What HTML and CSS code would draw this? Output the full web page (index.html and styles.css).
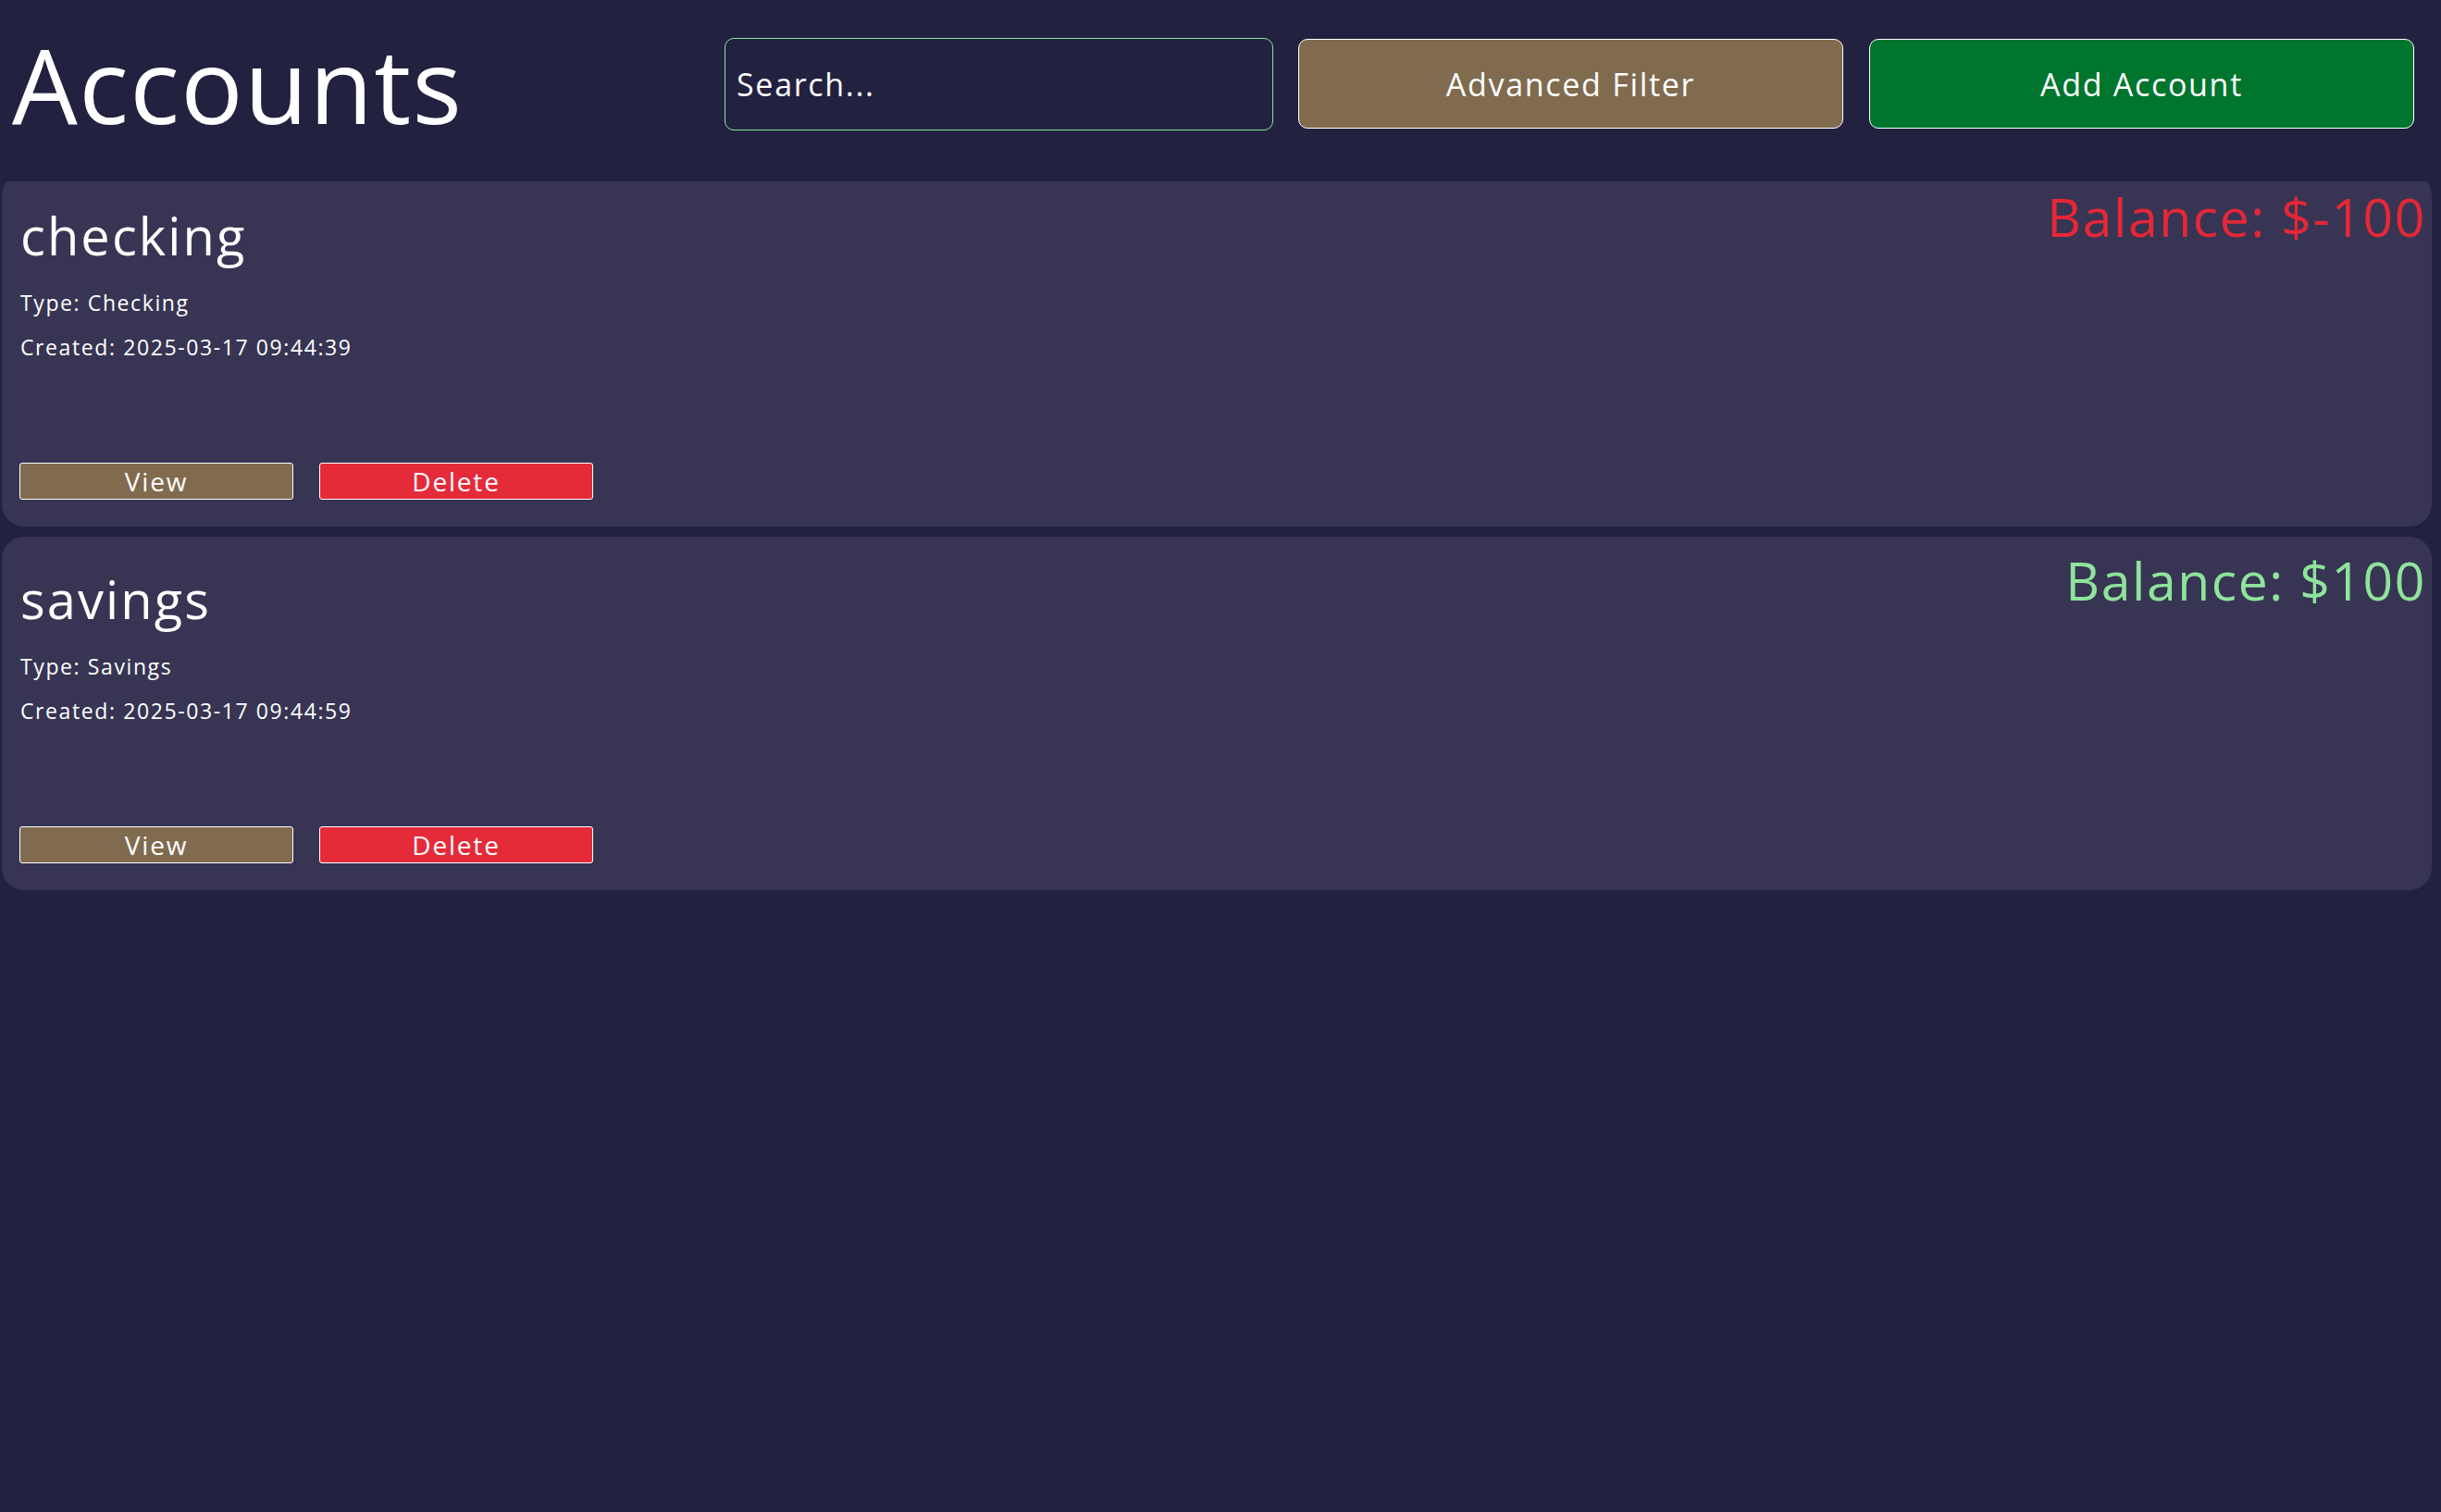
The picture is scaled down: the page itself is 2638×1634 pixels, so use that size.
FILE: index.html
```html
<!DOCTYPE html>
<html lang="en">
<head>
<meta charset="utf-8">
<title>Accounts</title>
<link rel="stylesheet" href="styles.css">
</head>
<body>
  <header class="header">
    <h1 class="title">Accounts</h1>
    <div class="controls">
      <input class="search" type="text" placeholder="Search...">
      <button class="btn btn-filter">Advanced Filter</button>
      <button class="btn btn-add">Add Account</button>
    </div>
  </header>
  <main class="list">
    <section class="card">
      <div class="card-top">
        <div class="info">
          <h2 class="name">checking</h2>
          <p class="meta meta-type">Type: Checking</p>
          <p class="meta meta-created">Created: 2025-03-17 09:44:39</p>
        </div>
        <div class="balance negative">Balance: $-100</div>
      </div>
      <div class="actions">
        <button class="small-btn view">View</button>
        <button class="small-btn delete">Delete</button>
      </div>
    </section>
    <section class="card">
      <div class="card-top">
        <div class="info">
          <h2 class="name">savings</h2>
          <p class="meta meta-type">Type: Savings</p>
          <p class="meta meta-created">Created: 2025-03-17 09:44:59</p>
        </div>
        <div class="balance positive">Balance: $100</div>
      </div>
      <div class="actions">
        <button class="small-btn view">View</button>
        <button class="small-btn delete">Delete</button>
      </div>
    </section>
  </main>
</body>
</html>
```
FILE: styles.css
```css
* {
  box-sizing: border-box;
}

html, body {
  margin: 0;
  padding: 0;
  background: #22213f;
  height: 100%;
}

body {
  font-family: "Open Sans", "Noto Sans", sans-serif;
  color: #ffffff;
  letter-spacing: 1.6px;
}

.header {
  display: flex;
  align-items: center;
  padding: 14px 29px 0 13px;
}

.title {
  margin: 0;
  font-size: 112px;
  font-weight: 400;
  line-height: normal;
  letter-spacing: 1.4px;
  flex: 1;
}

.controls {
  display: flex;
  align-items: center;
  gap: 27px;
}

.search {
  width: 593px;
  height: 100px;
  background: transparent;
  border: 1px solid #8fe39c;
  border-radius: 10px;
  padding: 0 12px;
  font-family: "Open Sans", "Noto Sans", sans-serif;
  font-size: 34px;
  letter-spacing: 1.7px;
  color: #ffffff;
  outline: none;
}

.search::placeholder {
  color: #ffffff;
  opacity: 1;
}

.btn {
  width: 589px;
  height: 97px;
  border: 1px solid #ffffff;
  border-radius: 10px;
  font-family: "Open Sans", "Noto Sans", sans-serif;
  font-size: 34px;
  letter-spacing: 1.7px;
  color: #ffffff;
  padding: 0;
}

.btn-filter {
  background: #806b4f;
}

.btn-add {
  background: #00752e;
  margin-left: 1px;
}

.list {
  margin: 29px 10px 0 2px;
  border-radius: 4px;
  overflow: hidden;
}

.card {
  background: #373553;
  border-radius: 24px;
  padding: 0 6px 29px 20px;
  margin-bottom: 11px;
}

.card:first-child {
  margin-top: -9px;
}

.card-top {
  display: flex;
  justify-content: space-between;
  align-items: flex-start;
}

.name {
  margin: 33px 0 0 0;
  font-size: 56px;
  font-weight: 400;
  line-height: 68px;
  letter-spacing: 2.1px;
}

.meta {
  margin: 0;
  font-size: 23px;
  line-height: 28px;
  letter-spacing: 1.6px;
}

.meta-type {
  margin-top: 25px;
}

.meta-created {
  margin-top: 20px;
}

.balance {
  margin-top: 13px;
  font-size: 57px;
  line-height: 68px;
}

.negative {
  color: #e52737;
}

.positive {
  color: #8fe39c;
}

.actions {
  display: flex;
  gap: 28px;
  margin-top: 111px;
}

.small-btn {
  width: 296px;
  height: 40px;
  border: 1px solid #ffffff;
  border-radius: 3px;
  font-family: "Open Sans", "Noto Sans", sans-serif;
  font-size: 28px;
  letter-spacing: 1.8px;
  line-height: 36px;
  color: #ffffff;
  padding: 0;
}

.small-btn.view {
  margin-left: -1px;
}

.view {
  background: #806b4f;
}

.delete {
  background: #e52a3a;
}
```
